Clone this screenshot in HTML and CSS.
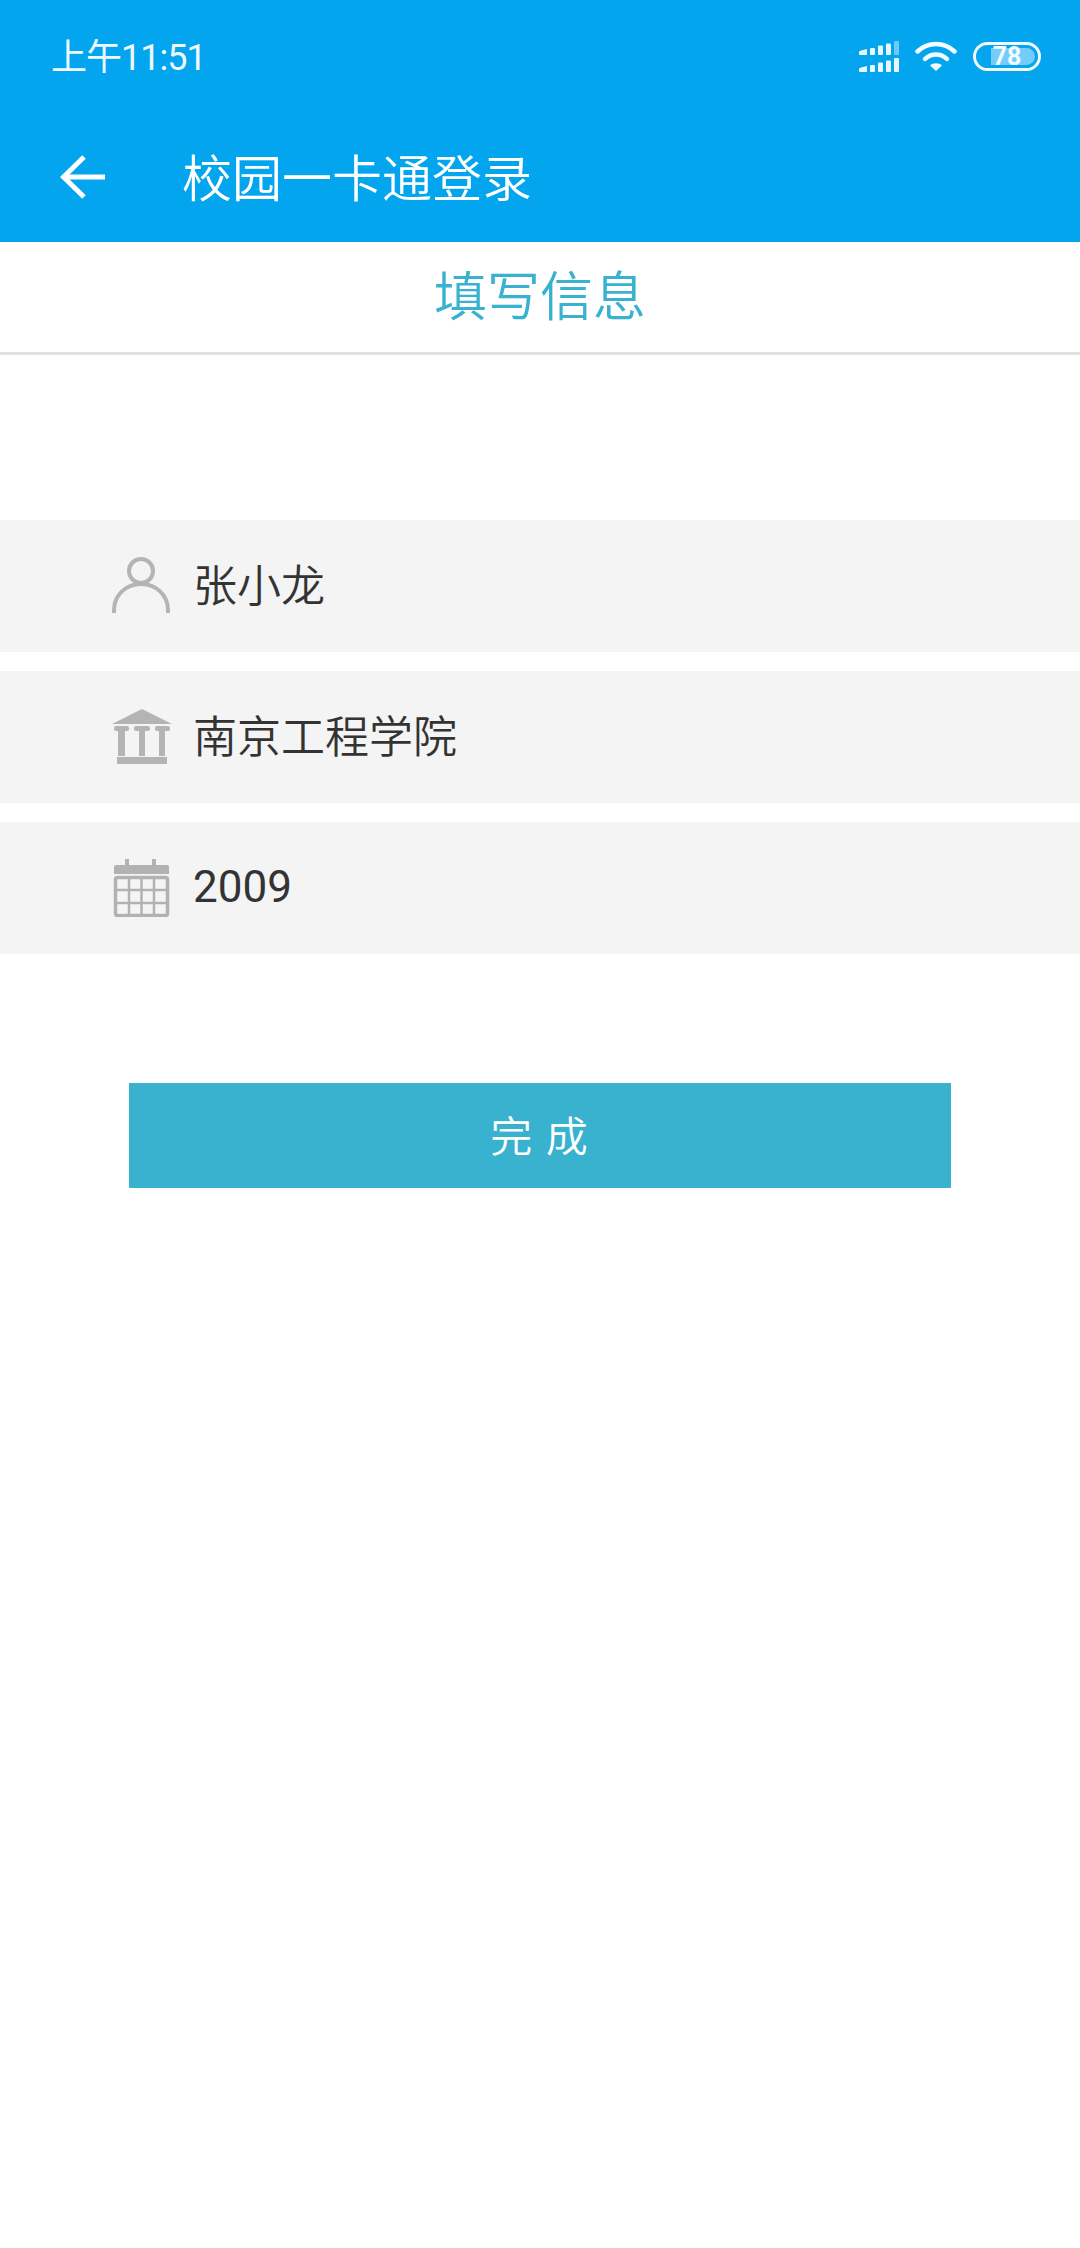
FILE: index.html
```html
<!DOCTYPE html>
<html lang="zh-CN">
<head>
<meta charset="utf-8">
<title>校园一卡通登录</title>
<link rel="stylesheet" href="styles.css">
</head>
<body>
<div class="app">
  <header class="appbar">
    <div class="status">
      <span class="time">上午11:51</span>
      <div class="status-icons">
        <svg class="signal" width="40" height="31" viewBox="0 0 40 31">
          <g fill="#e8f7fe">
            <path d="M0 11q0-1 2-1.500l6-1.500v6H1q-1 0-1-1z"/><rect x="11" y="7" width="5" height="7" rx="1"/><rect x="19" y="4.500" width="5" height="9.500" rx="1"/><rect x="27" y="2.500" width="5" height="11.500" rx="1"/>
            <path d="M0 28q0-1 2-1.500l6-1.500v6H1q-1 0-1-1z"/><rect x="11" y="24" width="5" height="7" rx="1"/><rect x="19" y="21.500" width="5" height="9.500" rx="1"/><rect x="27" y="19.500" width="5" height="11.500" rx="1"/><rect x="35" y="17" width="5" height="14" rx="1"/>
          </g>
          <rect x="35" y="0" width="5" height="14" rx="1" fill="#6cc9f8"/>
        </svg>
        <svg class="wifi" width="42" height="30" viewBox="0 0 42 30">
          <g fill="none" stroke="#f2fbff" stroke-width="4.500" stroke-linecap="round">
            <path d="M2.500 10.500C13 .5 29 .5 39.500 10.500"/>
            <path d="M10 18C16 12 26 12 32 18"/>
          </g>
          <path d="M15 24.500c3-3 9-3 12 0L21 30z" fill="#f2fbff"/>
        </svg>
        <div class="battery">
          <span class="battery-fill"></span>
          <span class="battery-text">78</span>
        </div>
      </div>
    </div>
    <div class="toolbar">
      <svg class="back" width="46" height="46" viewBox="0 0 46 46">
        <path d="M24 3L3.500 23 24 43M3.500 23H45" fill="none" stroke="#fff" stroke-width="5"/>
      </svg>
      <h1 class="page-title">校园一卡通登录</h1>
    </div>
  </header>

  <div class="tab">填写信息</div>

  <main class="form">
    <div class="row">
      <svg class="row-icon" width="60" height="58" viewBox="0 0 60 58">
        <g fill="none" stroke="#b4b4b4" stroke-width="4">
          <circle cx="29" cy="14" r="12"/>
          <path d="M2 56V53C2 38 14 27 29 27S56 38 56 53V56"/>
        </g>
      </svg>
      <span class="row-text">张小龙</span>
    </div>
    <div class="row">
      <svg class="row-icon" width="60" height="56" viewBox="0 0 60 56">
        <g fill="#b4b4b4">
          <path d="M30 0L60 15H0z"/>
          <rect x="2" y="17" width="15" height="5" rx="2"/><rect x="22" y="17" width="16" height="5" rx="2"/><rect x="43" y="17" width="15" height="5" rx="2"/>
          <rect x="6" y="22" width="7" height="25"/><rect x="27" y="22" width="6" height="25"/><rect x="47" y="22" width="6" height="25"/>
          <rect x="5" y="48" width="50" height="7"/>
        </g>
      </svg>
      <span class="row-text">南京工程学院</span>
    </div>
    <div class="row">
      <svg class="row-icon" width="60" height="58" viewBox="0 0 60 58">
        <g fill="#b2b2b2">
          <rect x="13" y="0" width="4" height="8"/><rect x="40" y="0" width="4" height="8"/>
          <path d="M4 6H55Q57 6 57 8V15H2V8Q2 6 4 6z"/>
        </g>
        <g fill="none" stroke="#b2b2b2">
          <rect x="3.500" y="18.500" width="52" height="38" rx="2" stroke-width="3.500"/>
          <path d="M4 31H55M4 44H55M17 18V57M29.500 18V57M42 18V57" stroke-width="2.500"/>
        </g>
      </svg>
      <span class="row-text row-num">2009</span>
    </div>
  </main>

  <button class="submit" type="button"><span class="submit-label">完 成</span></button>
</div>
</body>
</html>
```

FILE: styles.css
```css
* { box-sizing: border-box; }
html, body { margin: 0; padding: 0; background: #fff; }
body { font-family: "Noto Sans CJK SC", Roboto, sans-serif; }
.app { width: 1080px; height: 2248px; background: #fff; display: flex; flex-direction: column; }

.appbar { background: #02a5ee; height: 242px; color: #fff; }
.status { height: 112px; display: flex; align-items: center; justify-content: space-between; padding: 0 39px 0 51px; }
.time { font-family: Roboto, "Noto Sans CJK SC", sans-serif; font-size: 36px; font-weight: 400; letter-spacing: -1px; color: #eef9ff; margin-top: -4px; }
.status-icons { display: flex; align-items: center; gap: 16px; }
.signal { display: block; margin-top: 1px; }
.wifi { display: block; }
.battery { position: relative; width: 68px; height: 29px; border: 3px solid #f2fbff; border-radius: 15px; display: flex; align-items: center; justify-content: center; }
.battery-fill { position: absolute; left: 15px; top: 3px; right: 3px; bottom: 3px; background: #74cdf9; border-radius: 0 9px 9px 0; }
.battery-text { position: relative; font-family: Roboto, sans-serif; font-size: 25px; font-weight: 700; line-height: 23px; color: #f2fbff; }

.toolbar { height: 130px; display: flex; align-items: center; padding-left: 60px; }
.back { display: block; }
.page-title { margin: 0 0 4px 76px; font-size: 50px; font-weight: 350; color: #fff; line-height: 1; }

.tab { height: 113px; flex: none; border-bottom: 3px solid #e2e2e2; padding-bottom: 9px; display: flex; align-items: center; justify-content: center; font-size: 53px; font-weight: 350; color: #38b2cf; }

.form { margin-top: 165px; display: flex; flex-direction: column; gap: 19px; }
.row { height: 132px; background: #f4f4f4; display: flex; align-items: center; padding-left: 112px; gap: 21px; }
.row-icon { display: block; flex: none; }
.row-text { font-size: 44px; font-weight: 350; color: #333; line-height: 1; margin-bottom: 6px; }
.row-num { font-family: Roboto, sans-serif; font-size: 44px; font-weight: 400; margin-bottom: 2px; }

.submit { display: block; flex: none; margin: 129px 0 0 129px; width: 822px; height: 105px; border: 0; padding: 0 0 5px; background: #38b2cf; color: #fff; font-family: "Noto Sans CJK SC", sans-serif; font-size: 42px; font-weight: 350; }
.submit-label { letter-spacing: 2px; }
```
